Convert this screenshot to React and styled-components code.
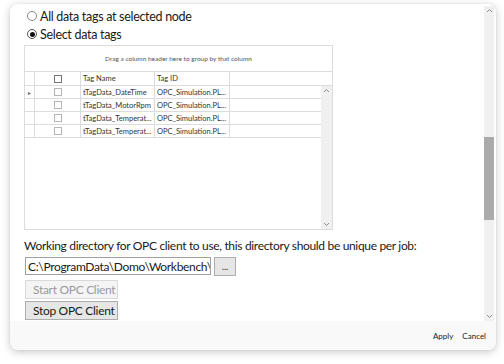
import React from "react";
import styled, { createGlobalStyle } from "styled-components";

const Global = createGlobalStyle`
  html, body { margin: 0; padding: 0; background: #ffffff; }
  body { font-family: Lato, "Noto Sans", sans-serif; color: #222; }
`;

const Page = styled.div`
  width: 504px;
  height: 364px;
  box-sizing: border-box;
  padding: 4px 8px 14px 10px;
  background: #fff;
`;

const Card = styled.div`
  height: 100%;
  border-radius: 8px;
  background: #fff;
  box-shadow: 0 2px 8px rgba(0,0,0,0.22), 0 0 2px rgba(0,0,0,0.08);
  display: flex;
  flex-direction: column;
  overflow: hidden;
`;

const Main = styled.div`
  flex: 1;
  display: flex;
  min-height: 0;
`;

const Content = styled.div`
  flex: 1;
  padding: 3px 0 0 14px;
  display: flex;
  flex-direction: column;
`;

const RadioRow = styled.label`
  display: flex;
  align-items: center;
  gap: 3px;
  height: 18px;
  padding-left: 3px;
  font-size: 12.5px;
  letter-spacing: -0.3px;
  color: #1a1a1a;
  white-space: nowrap;
`;

const RadioDot = styled.span`
  width: 8px;
  height: 8px;
  border-radius: 50%;
  border: 1px solid ${p => (p.$on ? "#555" : "#8a8a8a")};
  background: #fff;
  display: flex;
  align-items: center;
  justify-content: center;
  &::after {
    content: "";
    width: 5px;
    height: 5px;
    border-radius: 50%;
    background: ${p => (p.$on ? "#111" : "transparent")};
  }
`;

const Grid = styled.div`
  margin-top: 2px;
  width: 309px;
  height: 185px;
  box-sizing: border-box;
  border: 1px solid #dcdcdc;
  display: flex;
  flex-direction: column;
  font-size: 7.5px;
  color: #333;
`;

const GroupPanel = styled.div`
  height: 25px;
  display: flex;
  align-items: center;
  justify-content: center;
  font-size: 6.5px;
  color: #555;
  border-bottom: 1px solid #dcdcdc;
`;

const HeaderRow = styled.div`
  display: grid;
  grid-template-columns: 10px 46px 74px 75px 1fr;
  height: 13px;
  border-bottom: 1px solid #dcdcdc;
`;

const Cell = styled.div`
  display: flex;
  align-items: center;
  justify-content: ${p => (p.$center ? "center" : "flex-start")};
  padding-left: ${p => (p.$center ? 0 : 2)}px;
  border-right: ${p => (p.$last ? "none" : "1px solid #dcdcdc")};
  overflow: hidden;
  white-space: nowrap;
`;

const Body = styled.div`
  flex: 1;
  display: flex;
  min-height: 0;
`;

const Rows = styled.div`
  flex: 1;
  display: flex;
  flex-direction: column;
`;

const DataRow = styled.div`
  display: grid;
  grid-template-columns: 10px 46px 74px 75px 1fr;
  height: 12px;
  border-bottom: 1px solid #dcdcdc;
`;

const Box = styled.span`
  width: 8px;
  height: 8px;
  box-sizing: border-box;
  border: 1px solid ${p => (p.$dark ? "#777" : "#b5b5b5")};
  background: #fff;
`;

const Arrow = styled.span`
  font-size: 6px;
  color: #666;
`;

const VScroll = styled.div`
  width: ${p => p.$w}px;
  background: #f0f0f0;
  display: flex;
  flex-direction: column;
  align-items: center;
  justify-content: space-between;
  padding: 2px 0;
  box-sizing: border-box;
  margin: ${p => p.$m || 0};
`;

const Thumb = styled.div`
  width: 100%;
  background: #ababab;
  height: 83px;
`;

const ThumbWrap = styled.div`
  flex: 1;
  width: 100%;
  display: flex;
  flex-direction: column;
  padding-top: 124px;
  box-sizing: border-box;
`;

const Chevron = ({ up }) => (
  <svg width="7" height="5" viewBox="0 0 7 5">
    <path d={up ? "M1 4 L3.5 1.5 L6 4" : "M1 1 L3.5 3.5 L6 1"} fill="none" stroke="#8a8a8a" strokeWidth="1" />
  </svg>
);

const Label = styled.div`
  margin-top: 8px;
  font-size: 12px;
  letter-spacing: -0.33px;
  color: #1a1a1a;
  white-space: nowrap;
`;

const PathRow = styled.div`
  margin-top: 4px;
  display: flex;
  gap: 3px;
  padding-left: 1px;
`;

const PathInput = styled.input`
  width: 186px;
  height: 18px;
  box-sizing: border-box;
  margin: 0;
  border: 1px solid #a0a0a0;
  border-radius: 0;
  outline: none;
  font-family: Lato, "Noto Sans", sans-serif;
  font-size: 12px;
  letter-spacing: -0.33px;
  padding: 0 0 0 2px;
  color: #1a1a1a;
  background: #fff;
`;

const Btn = styled.div`
  width: ${p => p.$w}px;
  height: 19px;
  box-sizing: border-box;
  border: 1px solid ${p => (p.$disabled ? "#d9d9d9" : "#adadad")};
  background: ${p => (p.$disabled ? "#f4f4f4" : "#e6e6e6")};
  color: ${p => (p.$disabled ? "#9a9a9a" : "#1a1a1a")};
  font-size: ${p => p.$fs || 12}px;
  letter-spacing: ${p => (p.$center ? 0 : -0.3)}px;
  white-space: nowrap;
  display: flex;
  align-items: center;
  justify-content: ${p => (p.$center ? "center" : "flex-start")};
  padding-left: ${p => (p.$center ? 0 : 7)}px;
`;

const ButtonCol = styled.div`
  margin-top: 4px;
  display: flex;
  flex-direction: column;
  gap: 2px;
  padding-left: 1px;
`;

const Footer = styled.div`
  height: 29px;
  background: #f9f9f9;
  display: flex;
  align-items: center;
  justify-content: flex-end;
  gap: 9px;
  padding-right: 10px;
  font-size: 8px;
  color: #222;
`;

const rows = [
  ["tTagData_DateTime", "OPC_Simulation.PL..."],
  ["tTagData_MotorRpm", "OPC_Simulation.PL..."],
  ["tTagData_Temperat...", "OPC_Simulation.PL..."],
  ["tTagData_Temperat...", "OPC_Simulation.PL..."],
];

export default function App() {
  return (
    <>
      <Global />
      <Page>
        <Card>
          <Main>
            <Content>
              <RadioRow><RadioDot />All data tags at selected node</RadioRow>
              <RadioRow><RadioDot $on />Select data tags</RadioRow>
              <Grid>
                <GroupPanel>Drag a column header here to group by that column</GroupPanel>
                <HeaderRow>
                  <Cell />
                  <Cell $center><Box $dark /></Cell>
                  <Cell>Tag Name</Cell>
                  <Cell>Tag ID</Cell>
                  <Cell $last />
                </HeaderRow>
                <Body>
                  <Rows>
                    {rows.map((r, i) => (
                      <DataRow key={i}>
                        <Cell $center>{i === 0 ? <Arrow>▸</Arrow> : null}</Cell>
                        <Cell $center><Box /></Cell>
                        <Cell>{r[0]}</Cell>
                        <Cell>{r[1]}</Cell>
                        <Cell $last />
                      </DataRow>
                    ))}
                  </Rows>
                  <VScroll $w={11}>
                    <Chevron up />
                    <Chevron />
                  </VScroll>
                </Body>
              </Grid>
              <Label>Working directory for OPC client to use, this directory should be unique per job:</Label>
              <PathRow>
                <PathInput readOnly value="C:\ProgramData\Domo\Workbench\OPC" />
                <Btn $w={22} $center $fs={9}>...</Btn>
              </PathRow>
              <ButtonCol>
                <Btn $w={93} $disabled>Start OPC Client</Btn>
                <Btn $w={93}>Stop OPC Client</Btn>
              </ButtonCol>
            </Content>
            <VScroll $w={10} $m="2px 2px 0 0">
              <Chevron up />
              <ThumbWrap><Thumb /></ThumbWrap>
              <Chevron />
            </VScroll>
          </Main>
          <Footer>
            <span>Apply</span>
            <span>Cancel</span>
          </Footer>
        </Card>
      </Page>
    </>
  );
}
